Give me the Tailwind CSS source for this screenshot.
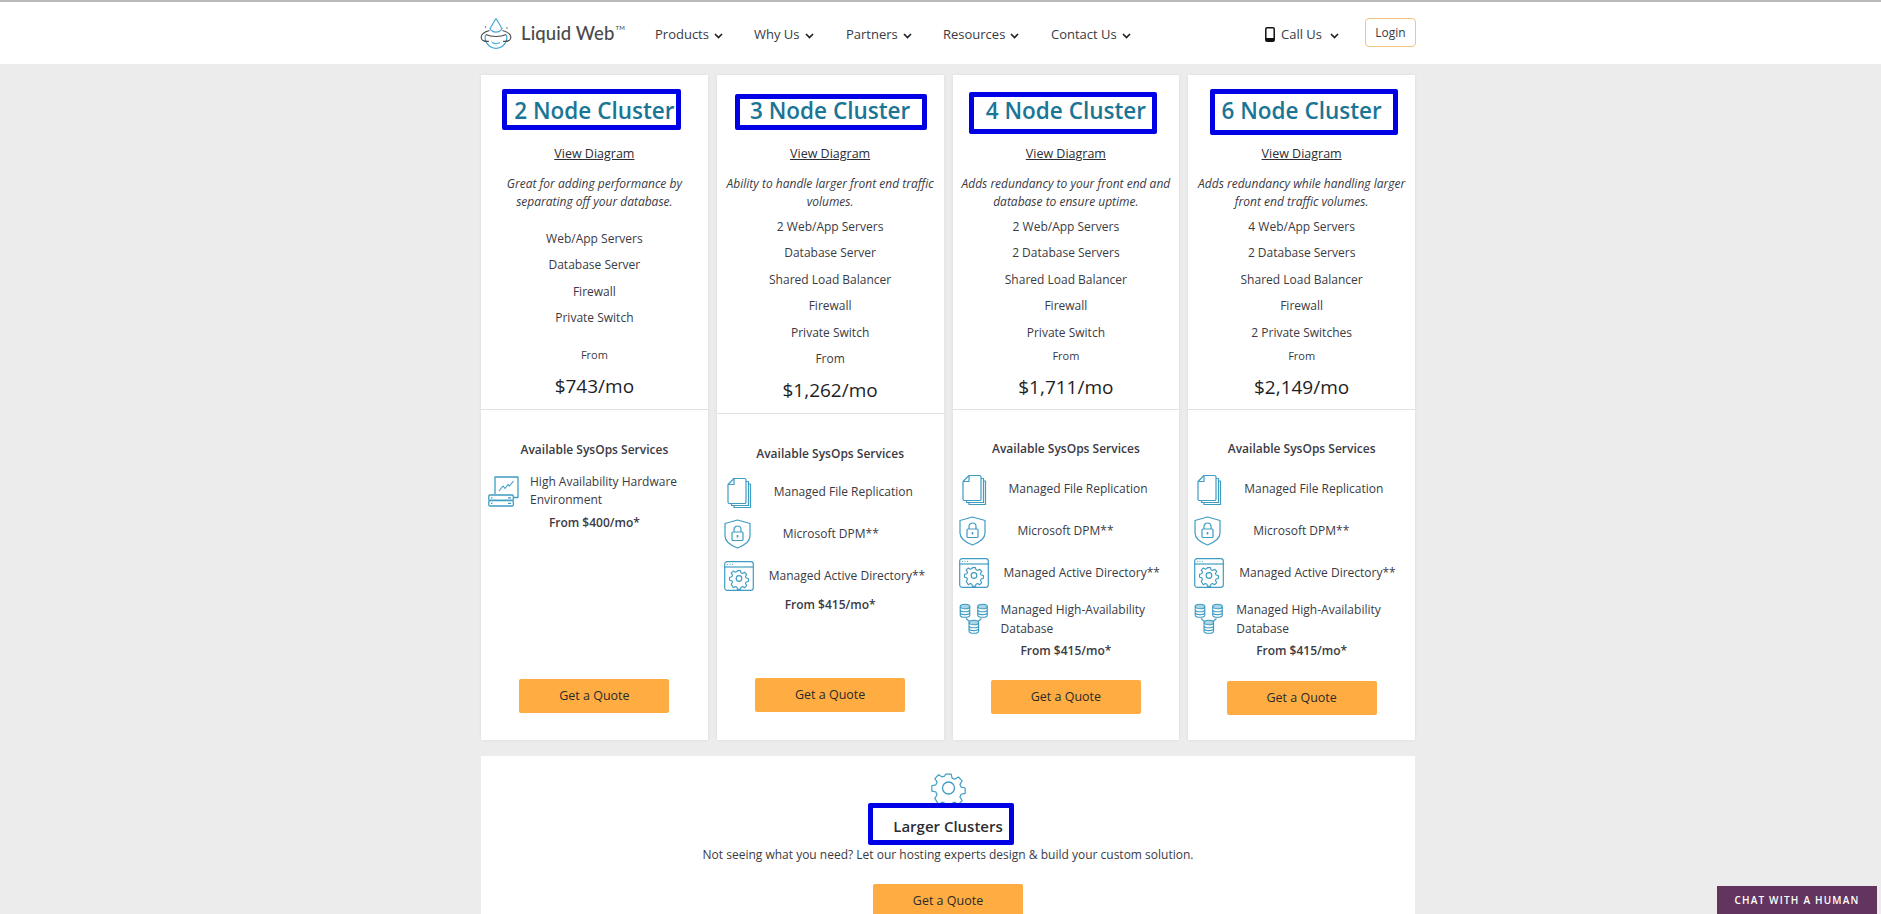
<!DOCTYPE html>
<html lang="en">
<head>
<meta charset="utf-8">
<title>Liquid Web</title>
<script src="https://cdn.jsdelivr.net/npm/@tailwindcss/browser@4"></script>
</head>
<body class="h-screen overflow-hidden bg-[#ececec] font-['Open_Sans',sans-serif] text-[12px] text-[#3a3a44]">
<svg class="absolute w-0 h-0" aria-hidden="true">
  <defs>
    <symbol id="i-file" viewBox="0 0 25 31"><g fill="none" stroke="#3f9cc2" stroke-width="1.2" stroke-linejoin="round"><path d="M7 1.5h10.500a1.500 1.500 0 0 1 1.500 1.500v22a1.500 1.500 0 0 1-1.500 1.500H2.500A1.500 1.500 0 0 1 1 25V7.500z"/><path d="M7 1.500V7.500H1"/><path d="M19 4.500h2.500V28.500H4.500V26.500"/><path d="M21.500 7h2V30.500H7V28.500"/></g></symbol>
    <symbol id="i-shield" viewBox="0 0 27 30"><g fill="none" stroke="#3f9cc2" stroke-width="1.2" stroke-linejoin="round"><path d="M13.500 1 26 4.500V17c0 5.500-6 9.500-12.500 12C7 26.500 1 22.500 1 17V4.500z"/><rect x="8" y="13" width="11" height="8.500" rx="1"/><path d="M10 13v-2.500a3.500 3.500 0 0 1 7 0V13"/><path d="M13.500 16v2.500" stroke-width="1.600"/></g></symbol>
    <symbol id="i-gear" viewBox="0 0 34 34"><g fill="none" stroke="#3f9cc2" stroke-width="1.300" stroke-linejoin="round"><path d="M14 1.500h6l1 4.500 3 1.300 4-2.500 4.200 4.200-2.500 4 1.300 3 4.500 1v6l-4.500 1-1.300 3 2.500 4-4.200 4.200-4-2.500-3 1.300-1 4.500h-6l-1-4.500-3-1.300-4 2.500L1.800 28.500l2.500-4-1.300-3-4.500-1v-6l4.500-1 1.300-3-2.500-4L6 2.300l4 2.500 3-1.300z" transform="translate(1.700 1.700) scale(.9)"/><circle cx="17" cy="17" r="6"/></g></symbol>
    <symbol id="i-window" viewBox="0 0 30 30"><g fill="none" stroke="#3f9cc2" stroke-width="1.200"><rect x=".7" y=".7" width="28.600" height="28.600" rx="2.500"/><path d="M.7 6h28.600"/><path d="M3 3.400h1M5.500 3.400h1M8 3.400h1" stroke-width=".9"/><path d="M14 1.500h6l1 4.500 3 1.300 4-2.500 4.200 4.200-2.500 4 1.300 3 4.500 1v6l-4.500 1-1.300 3 2.500 4-4.200 4.200-4-2.500-3 1.300-1 4.500h-6l-1-4.500-3-1.300-4 2.500L1.800 28.500l2.500-4-1.300-3-4.500-1v-6l4.500-1 1.300-3-2.500-4L6 2.300l4 2.500 3-1.300z" transform="translate(6.300 8.800) scale(.51)" stroke-width="2.200" stroke-linejoin="round"/><circle cx="15" cy="17.500" r="2.800"/></g></symbol>
    <symbol id="i-db" viewBox="0 0 30 31"><g fill="none" stroke="#3f9cc2" stroke-width="1.100"><g><ellipse cx="6" cy="3.500" rx="4.800" ry="2.300" fill="#a9d5e6"/><path d="M1.200 3.500v8.500c0 1.300 2.100 2.300 4.800 2.300s4.800-1 4.800-2.300V3.500M1.200 6.500c0 1.300 2.100 2.300 4.800 2.300s4.800-1 4.800-2.300M1.200 9.300c0 1.300 2.100 2.300 4.800 2.300s4.800-1 4.800-2.300"/></g><g transform="translate(17.500 0)"><ellipse cx="6" cy="3.500" rx="4.800" ry="2.300" fill="#a9d5e6"/><path d="M1.200 3.500v8.500c0 1.300 2.100 2.300 4.800 2.300s4.800-1 4.800-2.300V3.500M1.200 6.500c0 1.300 2.100 2.300 4.800 2.300s4.800-1 4.800-2.300M1.200 9.300c0 1.300 2.100 2.300 4.800 2.300s4.800-1 4.800-2.300"/></g><g transform="translate(8.800 16)"><ellipse cx="6" cy="3.500" rx="4.800" ry="2.300" fill="#a9d5e6"/><path d="M1.200 3.500v8.500c0 1.300 2.100 2.300 4.800 2.300s4.800-1 4.800-2.300V3.500M1.200 6.500c0 1.300 2.100 2.300 4.800 2.300s4.800-1 4.800-2.300M1.200 9.300c0 1.300 2.100 2.300 4.800 2.300s4.800-1 4.800-2.300"/></g><path d="M7 15.500l3.500 3M22.500 15.500l-3.500 3"/></g></symbol>
    <symbol id="i-hw" viewBox="0 0 31 31"><g fill="none" stroke="#3f9cc2" stroke-width="1.300" stroke-linejoin="round"><path d="M7 18V1h23v20.500h-4"/><path d="M11 15l4-5 2 2.500 3-4 1.500 1.500 4-5" stroke-width="1.100"/><rect x=".8" y="19" width="24.500" height="5.500" rx="1.200" fill="#fff"/><rect x=".8" y="24.500" width="24.500" height="5.500" rx="1.200" fill="#fff"/><path d="M3 21.800h1.500M3 27.300h1.500M20 21.800h3M20 27.300h3"/></g></symbol>
  </defs>
</svg>

<header class="h-16 bg-white border-t-2 border-[#b9b9b9]">
  <div class="relative ml-[481px] flex w-[934px] h-[62px] items-center">
    <svg class="w-[32px] h-[32px] ml-[-1px] mt-[-1px]" viewBox="0 0 32 32" fill="none">
      <path d="M10 21a11 11 0 0 0 12 9c-4-.5-9-3-12-9z" fill="#cde7f3"/>
      <path d="M16 1.500 10 11.500a6.800 6.800 0 0 0 12 0z" stroke="#45a8d3" stroke-width="1.200" stroke-linejoin="round"/>
      <path d="M5.500 18a10.800 10.800 0 1 0 21 0" stroke="#45a8d3" stroke-width="1.300"/>
      <path d="M9.500 13.500C4 15 .8 18 1.200 21c.4 2.800 4 3.800 7.800 3.200M22.500 13.500C28 15 31.200 18 30.800 21c-.4 2.800-4 3.800-7.800 3.200M5.800 17.500C9 19 12 19.500 16 19.500s7-.5 10.200-2" stroke="#4a4a4a" stroke-width="1.100"/>
      <path d="M12 25.500c1.800 1.300 6.200 1.300 8 0" stroke="#45a8d3" stroke-width="1.100"/>
      <circle cx="5.500" cy="10" r=".7" fill="#4a4a4a"/><circle cx="27" cy="11" r=".7" fill="#4a4a4a"/>
    </svg>
    <span class="ml-[9px] font-['Lato',sans-serif] text-[18.500px] font-medium tracking-[0.1px] text-[#4a4a4a] relative top-[1px]">Liquid Web<sup class="text-[6px] ml-[1px] top-[-10px]">TM</sup></span>
    <nav class="absolute left-[174px] top-0 flex h-full items-center pt-[3px] text-[13px] text-[#3a3a44]">
      <a class="flex items-center w-[99px]">Products<svg class="ml-[5px] w-[9px] h-[6px] mt-[2px]" viewBox="0 0 9 6" fill="none"><path d="M1 1l3.500 3.500L8 1" stroke="#222" stroke-width="1.700"/></svg></a>
      <a class="flex items-center w-[92px]">Why Us<svg class="ml-[5px] w-[9px] h-[6px] mt-[2px]" viewBox="0 0 9 6" fill="none"><path d="M1 1l3.500 3.500L8 1" stroke="#222" stroke-width="1.700"/></svg></a>
      <a class="flex items-center w-[97px]">Partners<svg class="ml-[5px] w-[9px] h-[6px] mt-[2px]" viewBox="0 0 9 6" fill="none"><path d="M1 1l3.500 3.500L8 1" stroke="#222" stroke-width="1.700"/></svg></a>
      <a class="flex items-center w-[108px]">Resources<svg class="ml-[5px] w-[9px] h-[6px] mt-[2px]" viewBox="0 0 9 6" fill="none"><path d="M1 1l3.500 3.500L8 1" stroke="#222" stroke-width="1.700"/></svg></a>
      <a class="flex items-center">Contact Us<svg class="ml-[5px] w-[9px] h-[6px] mt-[2px]" viewBox="0 0 9 6" fill="none"><path d="M1 1l3.500 3.500L8 1" stroke="#222" stroke-width="1.700"/></svg></a>
    </nav>
    <div class="absolute left-[784px] top-0 h-full flex items-center pt-[3px] text-[13px]">
      <svg class="w-[10px] h-[15px]" viewBox="0 0 10 15"><rect x=".8" y=".8" width="8.400" height="13.400" rx="1.300" fill="none" stroke="#111" stroke-width="1.500"/><rect x="1" y="11" width="8" height="3" fill="#111"/></svg>
      <span class="ml-[6px]">Call Us</span>
      <svg class="ml-[8px] w-[9px] h-[6px] mt-[2px]" viewBox="0 0 9 6" fill="none"><path d="M1 1l3.500 3.500L8 1" stroke="#222" stroke-width="1.700"/></svg>
    </div>
    <a class="absolute right-[-1px] top-[16px] flex h-[29px] w-[51px] items-center justify-center rounded-[4px] border border-[#f3c57f] text-[12px] text-[#3a3a44]">Login</a>
  </div>
</header>

<main class="ml-[481px] w-[934px]">
  <div class="mt-[11px] grid grid-cols-4 gap-[9px] h-[665px]">

    <section class="relative flex flex-col bg-white text-center shadow-[0_0_3px_rgba(0,0,0,0.08)]">
      <div class="absolute left-[21px] top-[14px] w-[179px] h-[41px] rounded-[2px] border-[5px] border-[#0000e6]"></div>
      <h2 class="mt-[19px] text-[22.500px] leading-[34px] font-semibold text-[#1a7596]">2 Node Cluster</h2>
      <a class="mt-[17px] text-[12.500px] leading-[18px] underline text-[#2d2d33] font-medium">View Diagram</a>
      <p class="mt-[12px] px-[6px] leading-[18px] italic">Great for adding performance by separating off your database.</p>
      <ul class="mt-[15px] leading-[26.400px]"><li>Web/App Servers</li><li>Database Server</li><li>Firewall</li><li>Private Switch</li></ul>
      <p class="mt-[14px] leading-[18px] text-[11px]">From</p>
      <p class="mt-[8px] text-[19px] leading-[28px] font-medium text-[#1e1e26]">$743/mo</p>
      <div class="mt-[9px] border-t border-[#e2e2e2]"></div>
      <h3 class="mt-[31px] leading-[18px] font-semibold">Available SysOps Services</h3>
      <div class="mt-[14px] flex items-start pl-[7px] text-left leading-[18px]">
        <svg class="mt-[3px] w-[31px] h-[31px] shrink-0"><use href="#i-hw"/></svg>
        <span class="ml-[11px]">High Availability Hardware Environment</span>
      </div>
      <p class="mt-[5px] leading-[18px] font-semibold">From $400/mo*</p>
      <a class="mt-auto mb-[27px] mx-auto flex h-[34px] w-[150px] items-center justify-center rounded-[2px] bg-[#ffad42] text-[12.500px] font-medium text-[#2a2a2a]">Get a Quote</a>
    </section>

    <section class="relative flex flex-col bg-white text-center shadow-[0_0_3px_rgba(0,0,0,0.08)]">
      <div class="absolute left-[18px] top-[19px] w-[192px] h-[36px] rounded-[2px] border-[5px] border-[#0000e6]"></div>
      <h2 class="mt-[19px] text-[22.500px] leading-[34px] font-semibold text-[#1a7596]">3 Node Cluster</h2>
      <a class="mt-[17px] text-[12.500px] leading-[18px] underline text-[#2d2d33] font-medium">View Diagram</a>
      <p class="mt-[12px] px-[6px] leading-[18px] italic">Ability to handle larger front end traffic volumes.</p>
      <ul class="mt-[3px] leading-[26.400px]"><li>2 Web/App Servers</li><li>Database Server</li><li>Shared Load Balancer</li><li>Firewall</li><li>Private Switch</li><li>From</li></ul>
      <p class="mt-[4px] text-[19px] leading-[28px] font-medium text-[#1e1e26]">$1,262/mo</p>
      <div class="mt-[9px] border-t border-[#e2e2e2]"></div>
      <h3 class="mt-[31px] leading-[18px] font-semibold">Available SysOps Services</h3>
      <div class="mt-[14px] flex flex-col gap-[12px] text-left">
        <div class="flex h-[30px] items-center pl-[10px]"><svg class="w-[25px] h-[31px] shrink-0"><use href="#i-file"/></svg><span class="ml-[22px]">Managed File Replication</span></div>
        <div class="flex h-[30px] items-center pl-[7px]"><svg class="w-[27px] h-[30px] shrink-0"><use href="#i-shield"/></svg><span class="ml-[32px]">Microsoft DPM**</span></div>
        <div class="flex h-[30px] items-center pl-[7px]"><svg class="w-[30px] h-[30px] shrink-0"><use href="#i-window"/></svg><span class="ml-[15px]">Managed Active Directory**</span></div>
      </div>
      <p class="mt-[5px] leading-[18px] font-semibold">From $415/mo*</p>
      <a class="mt-auto mb-[28px] mx-auto flex h-[34px] w-[150px] items-center justify-center rounded-[2px] bg-[#ffad42] text-[12.500px] font-medium text-[#2a2a2a]">Get a Quote</a>
    </section>

    <section class="relative flex flex-col bg-white text-center shadow-[0_0_3px_rgba(0,0,0,0.08)]">
      <div class="absolute left-[16px] top-[17px] w-[188px] h-[42px] rounded-[2px] border-[5px] border-[#0000e6]"></div>
      <h2 class="mt-[19px] text-[22.500px] leading-[34px] font-semibold text-[#1a7596]">4 Node Cluster</h2>
      <a class="mt-[17px] text-[12.500px] leading-[18px] underline text-[#2d2d33] font-medium">View Diagram</a>
      <p class="mt-[12px] px-[6px] leading-[18px] italic">Adds redundancy to your front end and database to ensure uptime.</p>
      <ul class="mt-[3px] leading-[26.400px]"><li>2 Web/App Servers</li><li>2 Database Servers</li><li>Shared Load Balancer</li><li>Firewall</li><li>Private Switch</li></ul>
      <p class="mt-[1px] leading-[18px] text-[11px]">From</p>
      <p class="mt-[8px] text-[19px] leading-[28px] font-medium text-[#1e1e26]">$1,711/mo</p>
      <div class="mt-[8px] border-t border-[#e2e2e2]"></div>
      <h3 class="mt-[30px] leading-[18px] font-semibold">Available SysOps Services</h3>
      <div class="mt-[16px] flex flex-col gap-[12px] text-left">
        <div class="flex h-[30px] items-center pl-[9px]"><svg class="w-[25px] h-[31px] shrink-0"><use href="#i-file"/></svg><span class="ml-[22px]">Managed File Replication</span></div>
        <div class="flex h-[30px] items-center pl-[6px]"><svg class="w-[27px] h-[30px] shrink-0"><use href="#i-shield"/></svg><span class="ml-[32px]">Microsoft DPM**</span></div>
        <div class="flex h-[30px] items-center pl-[6px]"><svg class="w-[30px] h-[30px] shrink-0"><use href="#i-window"/></svg><span class="ml-[15px]">Managed Active Directory**</span></div>
      </div>
      <div class="mt-[12px] flex items-start pl-[6px] text-left leading-[19px]"><svg class="mt-[3px] w-[30px] h-[31px] shrink-0"><use href="#i-db"/></svg><span class="ml-[12px]">Managed High-Availability Database</span></div>
      <p class="mt-[4px] leading-[18px] font-semibold">From $415/mo*</p>
      <a class="mt-auto mb-[26px] mx-auto flex h-[34px] w-[150px] items-center justify-center rounded-[2px] bg-[#ffad42] text-[12.500px] font-medium text-[#2a2a2a]">Get a Quote</a>
    </section>

    <section class="relative flex flex-col bg-white text-center shadow-[0_0_3px_rgba(0,0,0,0.08)]">
      <div class="absolute left-[22px] top-[14px] w-[188px] h-[46px] rounded-[2px] border-[5px] border-[#0000e6]"></div>
      <h2 class="mt-[19px] text-[22.500px] leading-[34px] font-semibold text-[#1a7596]">6 Node Cluster</h2>
      <a class="mt-[17px] text-[12.500px] leading-[18px] underline text-[#2d2d33] font-medium">View Diagram</a>
      <p class="mt-[12px] px-[6px] leading-[18px] italic">Adds redundancy while handling larger front end traffic volumes.</p>
      <ul class="mt-[3px] leading-[26.400px]"><li>4 Web/App Servers</li><li>2 Database Servers</li><li>Shared Load Balancer</li><li>Firewall</li><li>2 Private Switches</li></ul>
      <p class="mt-[1px] leading-[18px] text-[11px]">From</p>
      <p class="mt-[8px] text-[19px] leading-[28px] font-medium text-[#1e1e26]">$2,149/mo</p>
      <div class="mt-[8px] border-t border-[#e2e2e2]"></div>
      <h3 class="mt-[30px] leading-[18px] font-semibold">Available SysOps Services</h3>
      <div class="mt-[16px] flex flex-col gap-[12px] text-left">
        <div class="flex h-[30px] items-center pl-[9px]"><svg class="w-[25px] h-[31px] shrink-0"><use href="#i-file"/></svg><span class="ml-[22px]">Managed File Replication</span></div>
        <div class="flex h-[30px] items-center pl-[6px]"><svg class="w-[27px] h-[30px] shrink-0"><use href="#i-shield"/></svg><span class="ml-[32px]">Microsoft DPM**</span></div>
        <div class="flex h-[30px] items-center pl-[6px]"><svg class="w-[30px] h-[30px] shrink-0"><use href="#i-window"/></svg><span class="ml-[15px]">Managed Active Directory**</span></div>
      </div>
      <div class="mt-[12px] flex items-start pl-[6px] text-left leading-[19px]"><svg class="mt-[3px] w-[30px] h-[31px] shrink-0"><use href="#i-db"/></svg><span class="ml-[12px]">Managed High-Availability Database</span></div>
      <p class="mt-[4px] leading-[18px] font-semibold">From $415/mo*</p>
      <a class="mt-auto mb-[25px] mx-auto flex h-[34px] w-[150px] items-center justify-center rounded-[2px] bg-[#ffad42] text-[12.500px] font-medium text-[#2a2a2a]">Get a Quote</a>
    </section>
  </div>

  <section class="relative mt-[16px] h-[200px] bg-white text-center">
    <svg class="mx-auto block pt-[15px] box-content w-[35px] h-[34px]"><use href="#i-gear"/></svg>
    <div class="absolute left-[387px] top-[47px] w-[146px] h-[42px] rounded-[2px] border-[5px] border-[#0000e6]"></div>
    <h3 class="mt-[10px] text-[15px] leading-[22px] font-semibold text-[#2d2d33]">Larger Clusters</h3>
    <p class="mt-[9px] leading-[18px]">Not seeing what you need? Let our hosting experts design &amp; build your custom solution.</p>
    <a class="mt-[20px] mx-auto flex h-[34px] w-[150px] items-center justify-center rounded-[2px] bg-[#ffad42] text-[12.500px] font-medium text-[#2a2a2a]">Get a Quote</a>
  </section>
</main>

<a class="fixed bottom-0 right-[4px] flex h-[28px] w-[160px] items-center justify-center bg-[#63355e] text-[10px] font-semibold tracking-[1.200px] text-white">CHAT WITH A HUMAN</a>
</body>
</html>
